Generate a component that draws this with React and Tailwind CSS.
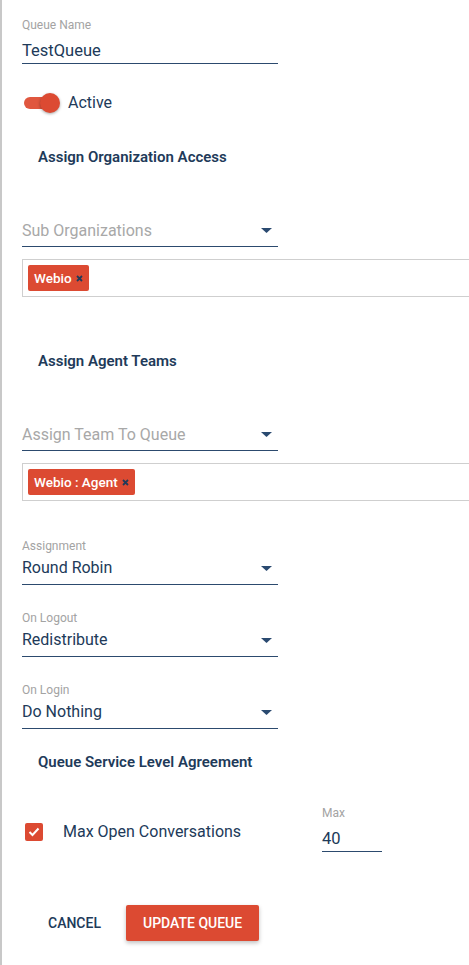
import React, { useState } from 'react';

const navy = 'text-[#213a59]';

const Caret = () => (
  <svg width="11" height="5" viewBox="0 0 11 5" className="mr-[6px] mb-[13px]">
    <path d="M0 0 L11 0 L5.5 5 Z" fill="#2a4a70" />
  </svg>
);

const Chip = ({ label }) => (
  <span className="inline-flex items-center h-[26px] px-[6px] rounded-[2px] bg-[#dc4a32] text-white text-[13.5px] font-medium">
    {label}
    <svg width="7" height="7" viewBox="0 0 7 7" className="ml-[4px] mt-[1px]">
      <path d="M1 1 L6 6 M6 1 L1 6" stroke="#213a59" strokeWidth="1.8" />
    </svg>
  </span>
);

const SelectField = ({ label, value, className = '' }) => (
  <div className={`w-[256px] ${className}`}>
    <div className="text-[12px] leading-[14px] text-[#a3a3a3]">{label}</div>
    <div className="h-[32px] flex items-end justify-between border-b border-[#2c4a6e]">
      <span className={`text-[16px] leading-[20px] pb-[6px] ${navy}`}>{value}</span>
      <Caret />
    </div>
  </div>
);

const PlaceholderSelect = ({ placeholder, className = '' }) => (
  <div className={`w-[256px] h-[32px] flex items-end justify-between border-b border-[#2c4a6e] ${className}`}>
    <span className="text-[16px] leading-[20px] pb-[5px] text-[#a8a8a8]">{placeholder}</span>
    <Caret />
  </div>
);

const ChipBox = ({ chips, className = '' }) => (
  <div className={`w-[480px] h-[38px] border border-[#cfcfcf] px-[5px] flex items-center gap-1 ${className}`}>
    {chips.map((c) => (
      <Chip key={c} label={c} />
    ))}
  </div>
);

const Heading = ({ children, className = '' }) => (
  <h3 className={`pl-4 text-[15px] leading-[20px] font-semibold ${navy} ${className}`}>{children}</h3>
);

export default function App() {
  const [active, setActive] = useState(true);
  const [maxOn, setMaxOn] = useState(true);

  return (
    <div
      className="min-h-[965px] w-[469px] overflow-hidden bg-white border-l-2 border-[#c8c8c8] pl-[20px] pt-[18px]"
      style={{ fontFamily: 'Roboto, "Liberation Sans", sans-serif' }}
    >
      {/* Queue name */}
      <div className="w-[256px]">
        <div className="text-[12px] leading-[14px] text-[#a3a3a3]">Queue Name</div>
        <div className="h-[32px] flex items-end border-b border-[#2c4a6e]">
          <span className={`text-[16.5px] leading-[20px] pb-[2px] ${navy}`}>TestQueue</span>
        </div>
      </div>

      {/* Active toggle */}
      <div className="mt-[29px] h-[20px] flex items-center">
        <button
          type="button"
          onClick={() => setActive(!active)}
          className="relative ml-[2px] w-[36px] h-[20px] flex items-center"
        >
          <span className={`w-[34px] h-[12px] rounded-full ${active ? 'bg-[#e0573f]' : 'bg-[#bdbdbd]'}`} />
          <span
            className={`absolute top-0 w-[20px] h-[20px] rounded-full shadow-[0_1px_3px_rgba(0,0,0,0.35)] ${
              active ? 'left-[16px] bg-[#dc4a32]' : 'left-0 bg-[#f5f5f5]'
            }`}
          />
        </button>
        <span className={`ml-[8px] text-[16px] ${navy}`}>Active</span>
      </div>

      <Heading className="mt-[34px]">Assign Organization Access</Heading>
      <PlaceholderSelect placeholder="Sub Organizations" className="mt-[48px]" />
      <ChipBox chips={['Webio']} className="mt-[12px]" />

      <Heading className="mt-[54px]">Assign Agent Teams</Heading>
      <PlaceholderSelect placeholder="Assign Team To Queue" className="mt-[48px]" />
      <ChipBox chips={['Webio : Agent']} className="mt-[12px]" />

      <SelectField label="Assignment" value="Round Robin" className="mt-[38px]" />
      <SelectField label="On Logout" value="Redistribute" className="mt-[26px]" />
      <SelectField label="On Login" value="Do Nothing" className="mt-[26px]" />

      <Heading className="mt-[23px]">Queue Service Level Agreement</Heading>

      {/* Max open conversations */}
      <div className="mt-[34px] flex items-start">
        <div className="w-[300px] mt-[16px] flex items-center h-[20px]">
          <button
            type="button"
            onClick={() => setMaxOn(!maxOn)}
            className={`ml-[3px] w-[18px] h-[18px] rounded-[2px] flex items-center justify-center ${
              maxOn ? 'bg-[#dc4a32]' : 'border-2 border-[#999]'
            }`}
          >
            {maxOn && (
              <svg width="12" height="10" viewBox="0 0 12 10">
                <path d="M1.5 5 L4.5 8 L10.5 1.5" stroke="white" strokeWidth="2" fill="none" />
              </svg>
            )}
          </button>
          <span className={`ml-[20px] text-[16px] ${navy}`}>Max Open Conversations</span>
        </div>
        <div className="w-[60px]">
          <div className="text-[12px] leading-[14px] text-[#a3a3a3]">Max</div>
          <div className="h-[32px] flex items-end border-b border-[#2c4a6e]">
            <span className={`text-[16.5px] leading-[20px] pb-[2px] ${navy}`}>40</span>
          </div>
        </div>
      </div>

      {/* Actions */}
      <div className="mt-[53px] flex items-center">
        <button type="button" className={`ml-[10px] h-[36px] px-4 text-[14px] font-medium uppercase ${navy}`}>
          Cancel
        </button>
        <button
          type="button"
          className="ml-[9px] h-[36px] px-[17px] rounded-[2px] bg-[#dc4a32] text-white text-[14px] font-medium uppercase shadow-[0_2px_4px_rgba(0,0,0,0.25)]"
        >
          Update Queue
        </button>
      </div>
    </div>
  );
}
